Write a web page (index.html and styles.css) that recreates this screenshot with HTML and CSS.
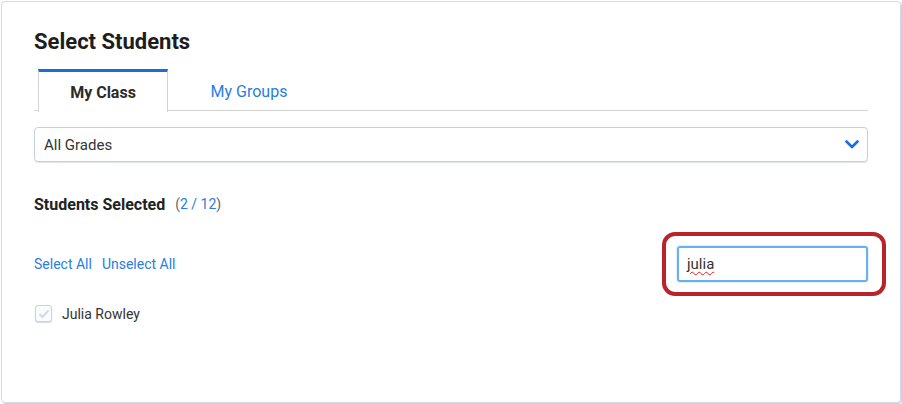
FILE: index.html
```html
<!DOCTYPE html>
<html>
<head>
<meta charset="utf-8">
<link rel="stylesheet" href="styles.css">
</head>
<body>
<div class="card">
  <h1 class="title">Select Students</h1>
  <div class="tabs">
    <div class="tab active">My Class</div>
    <div class="tab">My Groups</div>
  </div>
  <div class="select">
    <span>All Grades</span>
    <svg class="chev" width="14" height="9" viewBox="0 0 14 9"><path d="M1.5 1.5 L7 7 L12.5 1.5" fill="none" stroke="#1a6fd6" stroke-width="2.6" stroke-linecap="round" stroke-linejoin="round"/></svg>
  </div>
  <div class="selected">
    <span class="label">Students Selected</span>
    <span class="count">(<span class="num">2 / 12</span>)</span>
  </div>
  <div class="actions">
    <div class="links">
      <a class="link">Select All</a>
      <a class="link">Unselect All</a>
    </div>
    <div class="search-wrap">
      <div class="search"><span class="typed">julia</span></div>
      <div class="annot"></div>
    </div>
  </div>
  <div class="student">
    <span class="check">
      <svg width="12" height="10" viewBox="0 0 12 10"><path d="M1.5 5 L4.5 8 L10.5 1.5" fill="none" stroke="#c9dcf3" stroke-width="2"/></svg>
    </span>
    <span class="name">Julia Rowley</span>
  </div>
</div>
</body>
</html>
```
FILE: styles.css
```css
* { box-sizing: border-box; }
html, body { margin: 0; padding: 0; background: #fff; }
body {
  font-family: Roboto, "Noto Sans", Arial, sans-serif;
  color: #222;
  width: 902px;
  height: 404px;
  padding: 1px 1px 0 1px;
}
.card {
  width: 900px;
  height: 402px;
  border: 1px solid #d3d9e6;
  border-radius: 4px;
  box-shadow: 1px 1px 1px #c3cce0;
  padding: 0 32px 0 32px;
}
.title {
  margin: 25px 0 0 0;
  font-size: 22px;
  font-weight: 700;
  line-height: 30px;
  color: #1d1d1d;
}
.tabs {
  display: flex;
  margin-top: 12px;
  border-bottom: 1px solid #d4d4d4;
  height: 42px;
  padding-left: 4px;
}
.tab {
  width: 130px;
  height: 42px;
  display: flex;
  align-items: center;
  justify-content: center;
  font-size: 16px;
  color: #2a7de1;
}
.tab.active {
  border-top: 3px solid #1a6fd6;
  border-left: 1px solid #d4d4d4;
  border-right: 1px solid #d4d4d4;
  background: #fff;
  height: 43px;
  margin-bottom: -1px;
  font-weight: 700;
  color: #2b2b2b;
}
.tab:not(.active) { width: 162px; padding-top: 3px; }
.select {
  margin-top: 16px;
  height: 35px;
  border: 1px solid #c6cede;
  border-radius: 4px;
  box-shadow: 0 1px 1px #dfe4ee;
  display: flex;
  align-items: center;
  justify-content: space-between;
  padding: 0 8px 0 9px;
  font-size: 15px;
  color: #333;
}
.chev { display: block; }
.selected {
  margin-top: 32px;
  height: 20px;
  display: flex;
  align-items: center;
}
.label { font-weight: 700; color: #222; font-size: 16px; }
.count { margin-left: 10px; color: #666; font-size: 14px; }
.num { color: #2a7de1; }
.actions {
  margin-top: 32px;
  display: flex;
  justify-content: space-between;
  align-items: center;
  height: 36px;
}
.links { display: flex; gap: 10px; font-size: 14px; }
.link { color: #2a7de1; }
.search-wrap { position: relative; }
.search {
  width: 191px;
  height: 36px;
  border: 2px solid #6ab0f0;
  border-radius: 3px;
  box-shadow: 0 0 2px #9ccdf5;
  display: flex;
  align-items: center;
  padding-left: 8px;
  font-size: 15px;
  color: #333;
}
.typed {
  text-decoration: underline wavy #e02020;
  text-decoration-thickness: 1px;
  text-underline-offset: 2px;
}
.annot {
  position: absolute;
  left: -15px;
  top: -14px;
  width: 224px;
  height: 64px;
  border: 4px solid #b72429;
  border-radius: 13px;
  pointer-events: none;
}
.student {
  margin-top: 23px;
  display: flex;
  align-items: center;
  font-size: 14px;
  padding-left: 1px;
}
.check {
  width: 17px;
  height: 17px;
  border: 1px solid #c9d1de;
  border-radius: 3px;
  box-shadow: 0 1px 1px #d5dbe6;
  display: flex;
  align-items: center;
  justify-content: center;
  background: #fbfcfe;
}
.name { margin-left: 10px; color: #333; }
```
